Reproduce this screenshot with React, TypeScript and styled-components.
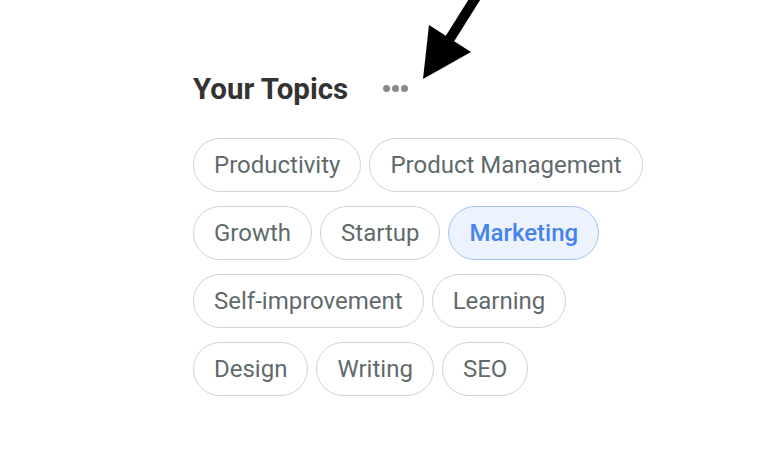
import React from "react";
import styled, { createGlobalStyle } from "styled-components";

const Global = createGlobalStyle`
  html, body { margin: 0; padding: 0; background: #ffffff; }
  body { font-family: Roboto, "Noto Sans", Arial, sans-serif; }
`;

const Page = styled.div`
  position: relative;
  width: 766px;
  height: 472px;
  overflow: hidden;
  background: #fff;
`;

const Panel = styled.section`
  display: flex;
  flex-direction: column;
  gap: 31px;
  padding: 72px 0 0 193px;
`;

const Header = styled.div`
  display: flex;
  align-items: center;
  gap: 35px;
`;

const Title = styled.h2`
  margin: 0;
  font-size: 29.5px;
  line-height: 35px;
  font-weight: 700;
  color: #333333;
  letter-spacing: 0;
`;

const MoreButton = styled.button`
  display: flex;
  align-items: center;
  gap: 2px;
  border: 0;
  padding: 0;
  margin-bottom: 3px;
  background: none;
  cursor: pointer;
`;

const Dot = styled.span`
  width: 7px;
  height: 7px;
  border-radius: 50%;
  background: #8a8a8a;
`;

const ChipList = styled.div`
  display: flex;
  flex-wrap: wrap;
  gap: 14px 8px;
  width: 470px;
`;

const Chip = styled.button<{ $active?: boolean }>`
  font-family: Roboto, "Noto Sans", Arial, sans-serif;
  font-size: 24px;
  line-height: 28px;
  font-weight: ${(p) => (p.$active ? 500 : 400)};
  padding: 12px 20px;
  border-radius: 27px;
  border: 1px solid ${(p) => (p.$active ? "#a4c2f6" : "#d2d2d2")};
  background: ${(p) => (p.$active ? "#edf3fe" : "#ffffff")};
  color: ${(p) => (p.$active ? "#4583ec" : "#5f6b6b")};
  cursor: pointer;
`;

const Arrow = styled.svg`
  position: absolute;
  left: 0;
  top: 0;
  pointer-events: none;
`;

const topics = [
  "Productivity",
  "Product Management",
  "Growth",
  "Startup",
  "Marketing",
  "Self-improvement",
  "Learning",
  "Design",
  "Writing",
  "SEO",
];

export default function App() {
  return (
    <Page>
      <Global />
      <Panel>
        <Header>
          <Title>Your Topics</Title>
          <MoreButton aria-label="More">
            <Dot />
            <Dot />
            <Dot />
          </MoreButton>
        </Header>
        <ChipList>
          {topics.map((t) => (
            <Chip key={t} $active={t === "Marketing"}>
              {t}
            </Chip>
          ))}
        </ChipList>
      </Panel>
      <Arrow width="766" height="472" viewBox="0 0 766 472">
        <polygon
          points="484.7,-7.3 454.2,41.2 471,52 423,79 429,25 445.8,35.8 476.3,-12.7"
          fill="#000"
        />
      </Arrow>
    </Page>
  );
}
